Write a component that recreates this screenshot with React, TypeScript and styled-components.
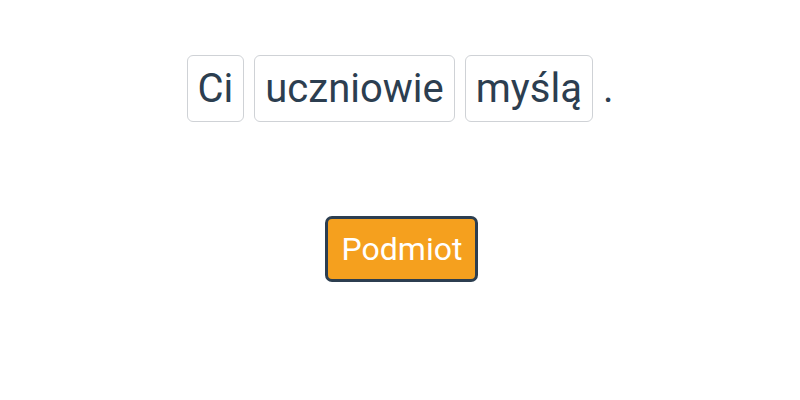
import React from "react";
import styled, { createGlobalStyle } from "styled-components";

const GlobalStyle = createGlobalStyle`
  html, body {
    margin: 0;
    padding: 0;
    background: #ffffff;
  }
  body {
    font-family: Roboto, "Liberation Sans", sans-serif;
  }
`;

const Page = styled.div`
  display: flex;
  flex-direction: column;
  align-items: center;
  padding-top: 55px;
  gap: 94px;
`;

const Sentence = styled.div`
  display: flex;
  align-items: center;
  gap: 10px;
`;

const Word = styled.span`
  display: inline-block;
  padding: 9px 10px;
  border: 1px solid #cfd2d6;
  border-radius: 6px;
  font-size: 40px;
  color: #2c3e50;
  background: #ffffff;
`;

const Punct = styled.span`
  font-size: 40px;
  color: #2c3e50;
`;

const Label = styled.button`
  font-family: Roboto, "Liberation Sans", sans-serif;
  font-size: 32px;
  color: #ffffff;
  background: #f5a01e;
  border: 3px solid #2c3e50;
  border-radius: 7px;
  padding: 11px 13px 11px 14px;
  margin-left: 3px;
  line-height: normal;
  cursor: pointer;
`;

const words = ["Ci", "uczniowie", "myślą"];

export default function App() {
  return (
    <>
      <GlobalStyle />
      <Page>
        <Sentence>
          {words.map((w) => (
            <Word key={w}>{w}</Word>
          ))}
          <Punct>.</Punct>
        </Sentence>
        <Label>Podmiot</Label>
      </Page>
    </>
  );
}
